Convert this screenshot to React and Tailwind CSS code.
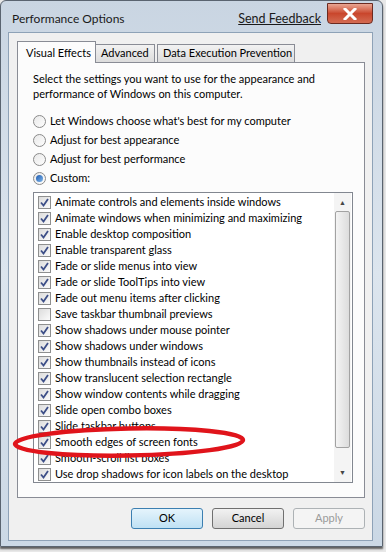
import React from 'react'

const FONT = { fontFamily: 'Lato, "Open Sans", sans-serif' }

const effects = [
  ['Animate controls and elements inside windows', true],
  ['Animate windows when minimizing and maximizing', true],
  ['Enable desktop composition', true],
  ['Enable transparent glass', true],
  ['Fade or slide menus into view', true],
  ['Fade or slide ToolTips into view', true],
  ['Fade out menu items after clicking', true],
  ['Save taskbar thumbnail previews', false],
  ['Show shadows under mouse pointer', true],
  ['Show shadows under windows', true],
  ['Show thumbnails instead of icons', true],
  ['Show translucent selection rectangle', true],
  ['Show window contents while dragging', true],
  ['Slide open combo boxes', true],
  ['Slide taskbar buttons', true],
  ['Smooth edges of screen fonts', true],
  ['Smooth-scroll list boxes', true],
  ['Use drop shadows for icon labels on the desktop', true],
]

function Radio({ checked, label }) {
  return (
    <div className="flex items-center h-[19px]">
      <span className="w-[13px] h-[13px] rounded-full border border-[#8a8a8a] bg-gradient-to-br from-[#e9e9e9] to-[#fdfdfd] flex items-center justify-center">
        {checked && <span className="w-[7px] h-[7px] rounded-full bg-gradient-to-br from-[#1e5bb0] to-[#7fb5e8]" />}
      </span>
      <span className="ml-[4px]">{label}</span>
    </div>
  )
}

function Check({ checked, label }) {
  return (
    <div className="flex items-center h-[16px]">
      <span className="w-[13px] h-[13px] border border-[#8e8f8f] bg-gradient-to-br from-[#dcdcdc] to-[#fbfbfb] flex items-center justify-center">
        {checked && (
          <svg width="9" height="9" viewBox="0 0 9 9">
            <path d="M1 4.5 L3.5 7.5 L8 1" fill="none" stroke="#3d4f88" strokeWidth="1.8" />
          </svg>
        )}
      </span>
      <span className="ml-[4px] whitespace-nowrap">{label}</span>
    </div>
  )
}

function Button({ children, primary, disabled }) {
  return (
    <div
      className={`w-[72px] h-[21px] rounded-[3px] border flex items-center justify-center ${
        primary
          ? 'border-[#3c7fb1] bg-gradient-to-b from-[#e5f4fc] to-[#bfe1f4] text-black'
          : disabled
          ? 'border-[#adb2b5] bg-[#f4f4f4] text-[#9a9a9a]'
          : 'border-[#707070] bg-gradient-to-b from-[#f2f2f2] to-[#d4d4d4] text-black'
      }`}
    >
      {children}
    </div>
  )
}

export default function App() {
  return (
    <div className="relative w-[386px] h-[552px] bg-[#e8e8e8] overflow-hidden text-[11px] text-black" style={FONT}>
      {/* window frame */}
      <div className="w-[383px] h-[547px] border border-[#5a6470] rounded-t-[6px] bg-gradient-to-b from-[#c9d5e2] via-[#dce5ee] to-[#cbd8e5] flex flex-col shadow-[0_2px_2px_rgba(0,0,0,0.6)]">
        {/* title bar */}
        <div className="h-[31px] flex items-start relative">
          <span className="mt-[9px] ml-[11px] text-[#1a1a1a] text-[12px]">Performance Options</span>
          <span className="mt-[9px] ml-auto mr-[6px] underline text-[#1a1a1a] text-[12.5px]">Send Feedback</span>
          <div className="mt-[2px] mr-[9px] w-[46px] h-[21px] rounded-b-[4px] border border-[#6b2a20] bg-gradient-to-b from-[#e8a593] via-[#c9462c] to-[#d36b52] flex items-center justify-center">
            <svg width="14" height="12" viewBox="0 0 14 12">
              <path d="M2 1 L12 11 M12 1 L2 11" stroke="#fff" strokeWidth="3" strokeLinecap="square" />
            </svg>
          </div>
        </div>

        {/* client area */}
        <div className="ml-[7px] w-[365px] h-[509px] border border-[#8ea2b7] bg-[#f0f0f0] flex flex-col">
          {/* tabs */}
          <div className="mt-[8px] ml-[8px] flex items-end h-[22px] relative z-10 whitespace-nowrap">
            <div className="h-[22px] w-[79px] border border-b-0 border-[#898c95] bg-[#fcfcfc] flex items-start pl-[8px] pt-[3px]">
              Visual Effects
            </div>
            <div className="h-[18px] w-[59px] border border-l-0 border-b-0 border-[#898c95] bg-gradient-to-b from-[#f2f2f2] to-[#dcdcdc] flex items-center pl-[5px] mb-[1px]">
              Advanced
            </div>
            <div className="h-[18px] w-[138px] ml-[2px] border border-b-0 border-[#898c95] bg-gradient-to-b from-[#f2f2f2] to-[#dcdcdc] flex items-center pl-[5px] mb-[1px]">
              Data Execution Prevention
            </div>
          </div>

          {/* panel */}
          <div className="ml-[8px] -mt-[1px] w-[348px] h-[436px] border border-[#898c95] bg-[#fcfcfc] pl-[15px] pr-[11px] pt-[8px]">
            <p className="leading-[15px] whitespace-nowrap">
              Select the settings you want to use for the appearance and
              <br />
              performance of Windows on this computer.
            </p>
            <div className="mt-[11px] flex flex-col">
              <Radio label="Let Windows choose what's best for my computer" />
              <Radio label="Adjust for best appearance" />
              <Radio label="Adjust for best performance" />
              <Radio checked label="Custom:" />
            </div>
            {/* list */}
            <div className="mt-[4px] w-[320px] h-[291px] border border-[#828790] bg-white flex">
              <div className="flex-1 pl-[4px] pt-[1px] overflow-hidden">
                {effects.map(([label, on]) => (
                  <Check key={label} checked={on} label={label} />
                ))}
              </div>
              <div className="w-[17px] mr-[1px] flex flex-col items-center py-[1px] bg-[#f4f4f4]">
                <div className="h-[17px] flex items-center text-[#444] text-[7px]">▲</div>
                <div className="w-[15px] h-[237px] rounded-[2px] border border-[#a2a2a2] bg-gradient-to-r from-[#f4f4f4] to-[#dcdcdc]" />
                <div className="mt-auto h-[17px] flex items-center text-[#444] text-[7px]">▼</div>
              </div>
            </div>
          </div>

          {/* buttons */}
          <div className="mt-[10px] ml-[122px] flex gap-[9px]">
            <Button primary>OK</Button>
            <Button>Cancel</Button>
            <Button disabled>Apply</Button>
          </div>
        </div>
      </div>

      {/* annotation overlay */}
      <svg className="absolute left-0 top-0 pointer-events-none" width="386" height="552">
        <ellipse cx="129" cy="442" rx="114" ry="13.5" fill="none" stroke="#e0141b" strokeWidth="4.5" transform="rotate(-1 129 442)" />
      </svg>
    </div>
  )
}
